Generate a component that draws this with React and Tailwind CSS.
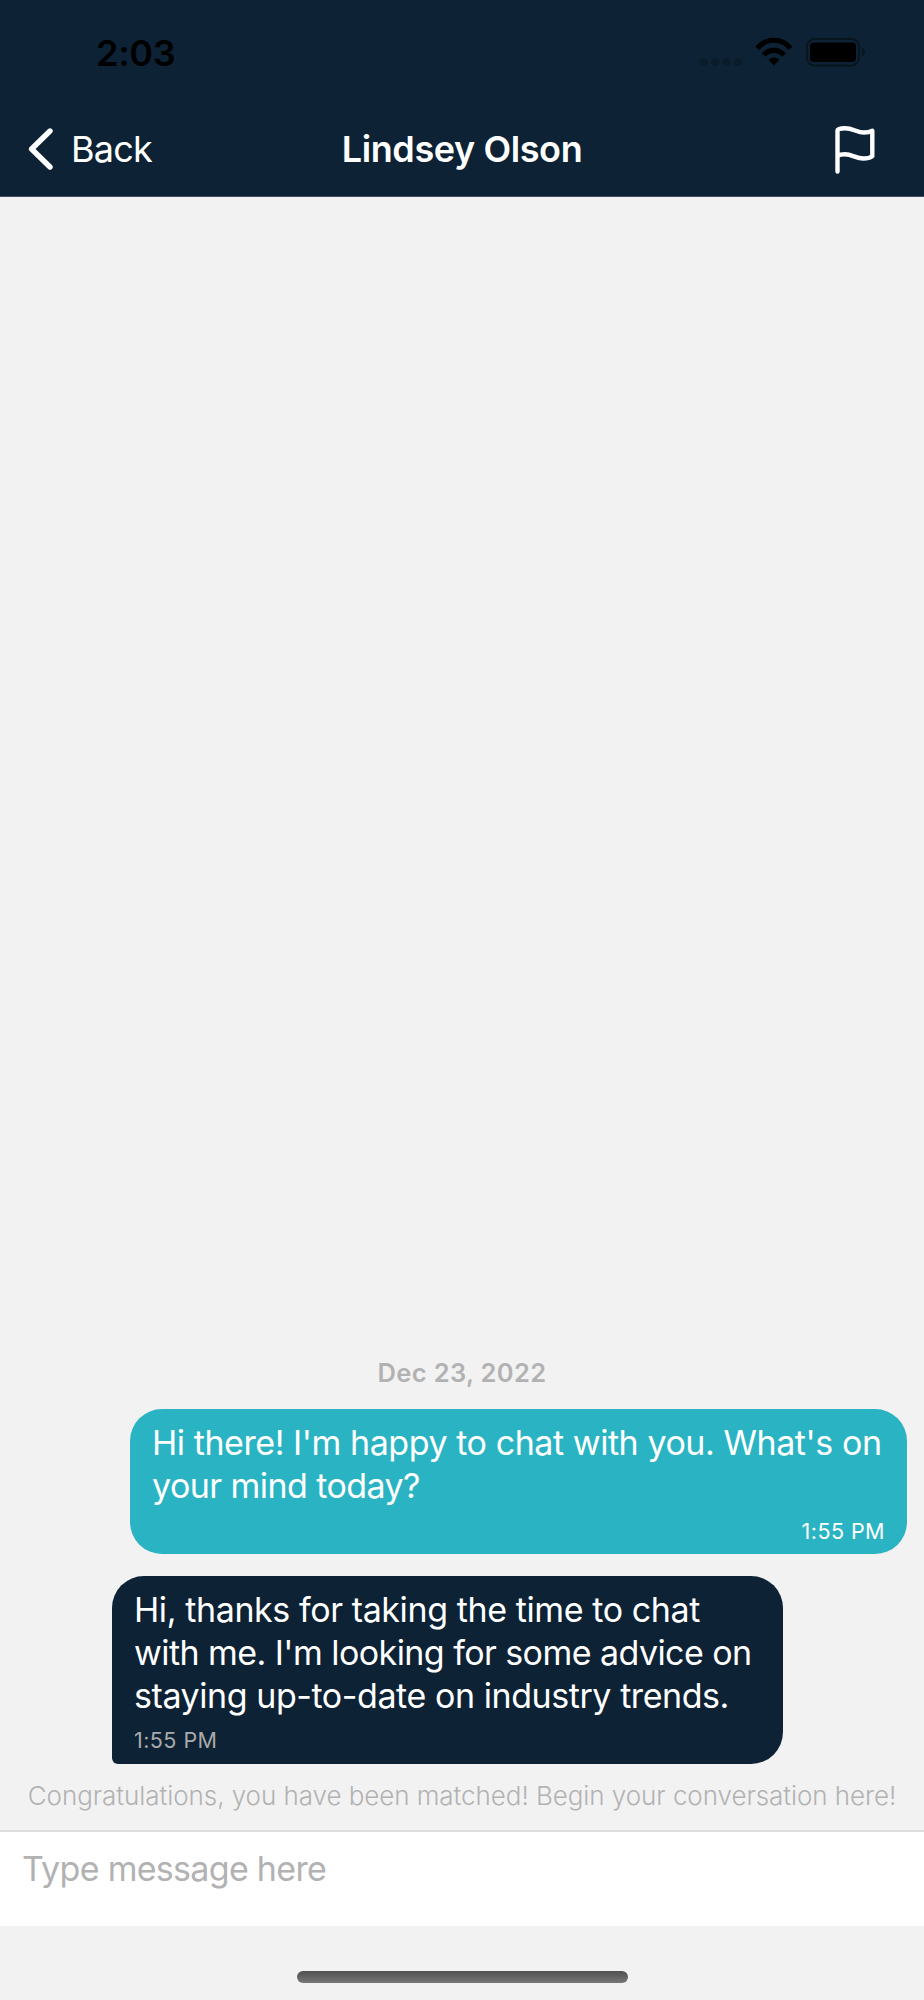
import React from 'react';

const messages = [
  {
    id: 1,
    mine: true,
    lines: [
      { text: "Hi there! I'm happy to chat with you. What's on", spacing: 'tracking-[-0.44px]' },
      { text: 'your mind today?', spacing: 'tracking-[-0.56px]' },
    ],
    time: '1:55 PM',
  },
  {
    id: 2,
    mine: false,
    lines: [
      { text: 'Hi, thanks for taking the time to chat', spacing: 'tracking-[-0.4px]' },
      { text: "with me. I'm looking for some advice on", spacing: 'tracking-[-0.56px]' },
      { text: 'staying up-to-date on industry trends.', spacing: 'tracking-[-0.43px]' },
    ],
    time: '1:55 PM',
  },
];

const StatusBar = () => (
  <div className="flex h-[104px] items-start justify-between pl-[96px] pr-[59px] text-black">
    <span className="pt-[30px] text-[36px] font-semibold leading-[46px] tracking-[-0.3px]">2:03</span>
    <svg className="mt-[36px]" width="166" height="32" viewBox="699 36 166 32" fill="none">
      <g fill="#0a1b2a">
        <circle cx="703.5" cy="62" r="3.8" />
        <circle cx="715.2" cy="62" r="3.8" />
        <circle cx="726.8" cy="62" r="3.8" />
        <circle cx="738.3" cy="62" r="3.8" />
      </g>
      {/* Wifi */}
      <g stroke="#000" strokeWidth="5.2">
        <path d="M757.3 48.4a21 21 0 0 1 33.2 0" />
        <path d="M763.8 55.1a13.2 13.2 0 0 1 20.2 0" />
      </g>
      <path fill="#000" d="M773.9 65.4l-5.5-5.6a8 8 0 0 1 11 0z" />
      {/* Battery */}
      <rect x="807" y="39" width="52" height="26.4" rx="7.5" stroke="#08151f" strokeWidth="2" />
      <rect x="810" y="42.6" width="46" height="19.4" rx="4" fill="#000" />
      <path fill="#08151f" d="M862 48v8.6c3.8-1.6 3.8-7 0-8.6z" />
    </svg>
  </div>
);

const Header = () => (
  <header className="h-[197px] border-b border-[#42515f] bg-[#0d2235]">
    <StatusBar />
    <div className="grid h-[90px] grid-cols-3 items-center text-white">
      <button className="flex items-center pl-[28px] text-left">
        <svg width="26" height="42" viewBox="0 0 26 42" fill="none" stroke="currentColor" strokeWidth="5.4" strokeLinecap="round" strokeLinejoin="round">
          <path d="M22 3L3.6 21L22 39" />
        </svg>
        <span className="pl-[17px] text-[36px] font-normal leading-[46px] tracking-[-0.8px]">Back</span>
      </button>
      <h1 className="whitespace-nowrap text-center text-[36px] font-semibold leading-[46px] tracking-[-0.4px]">Lindsey Olson</h1>
      <button className="flex justify-end pr-[49px]">
        <svg width="42" height="50" viewBox="833 124 42 50" fill="none" stroke="currentColor" strokeWidth="4.4" strokeLinecap="round" strokeLinejoin="round">
          <path d="M837.5 171.5V130.500Q837.500 128.200 845 128.200C853 128.200 857 132.500 864 132.500Q869 132.500 872.300 130.700V156.200Q869 158.500 863.500 158.500C856 158.500 852 154.300 845 154.300Q840 154.300 837.500 155.800" />
        </svg>
      </button>
    </div>
  </header>
);

const MessageText = ({ lines }) => (
  <div className="whitespace-nowrap text-[34px] leading-[43px]">
    {lines.map((line) => (
      <p key={line.text} className={line.spacing}>{line.text}</p>
    ))}
  </div>
);

const Message = ({ message }) => {
  if (message.mine) {
    return (
      <div className="mr-[17px] flex h-[145px] w-[777px] flex-col self-end rounded-[32px] bg-[#2ab4c3] px-[22px] pt-[12px] text-white">
        <MessageText lines={message.lines} />
        <span className="mt-[11px] self-end text-[21.5px] leading-[26px] tracking-[0.45px]">{message.time}</span>
      </div>
    );
  }
  return (
    <div className="ml-[112px] mt-[22px] flex h-[188px] w-[671px] flex-col rounded-[32px] rounded-bl-[6px] bg-[#0d2235] pl-[22px] pt-[12px] text-white">
      <MessageText lines={message.lines} />
      <span className="mt-[10px] text-[21.5px] leading-[26px] tracking-[0.45px] text-[#aaaaaa]">{message.time}</span>
    </div>
  );
};

export default function App() {
  return (
    <div className="flex h-[2000px] w-[924px] flex-col overflow-hidden bg-[#f2f2f2] font-['Inter',sans-serif]">
      <Header />

      {/* Conversation */}
      <main className="flex flex-1 flex-col justify-end">
        <div className="mb-[20px] text-center text-[25.5px] font-semibold leading-[32px] tracking-[0.33px] text-[#b2b2b2]">Dec 23, 2022</div>
        {messages.map((message) => <Message key={message.id} message={message} />)}
        <p className="mb-[18px] mt-[15px] whitespace-nowrap text-center text-[26px] font-light leading-[33px] tracking-[-0.06px] text-[#b2b2b2]">
          Congratulations, you have been matched! Begin your conversation here!
        </p>
      </main>

      {/* Composer */}
      <div className="h-[96px] border-t-2 border-[#dcdcdc] bg-white px-[22px] pt-[15px]">
        <input
          type="text"
          placeholder="Type message here"
          className="block h-[43px] w-full text-[34px] leading-[43px] tracking-[-0.7px] placeholder:text-[#b2b2b2] focus:outline-none"
        />
      </div>

      {/* Home indicator */}
      <div className="flex h-[74px] justify-center pt-[45px]">
        <div className="h-[12px] w-[331px] rounded-full bg-linear-to-b from-[#505050] to-[#777777]" />
      </div>
    </div>
  );
}
